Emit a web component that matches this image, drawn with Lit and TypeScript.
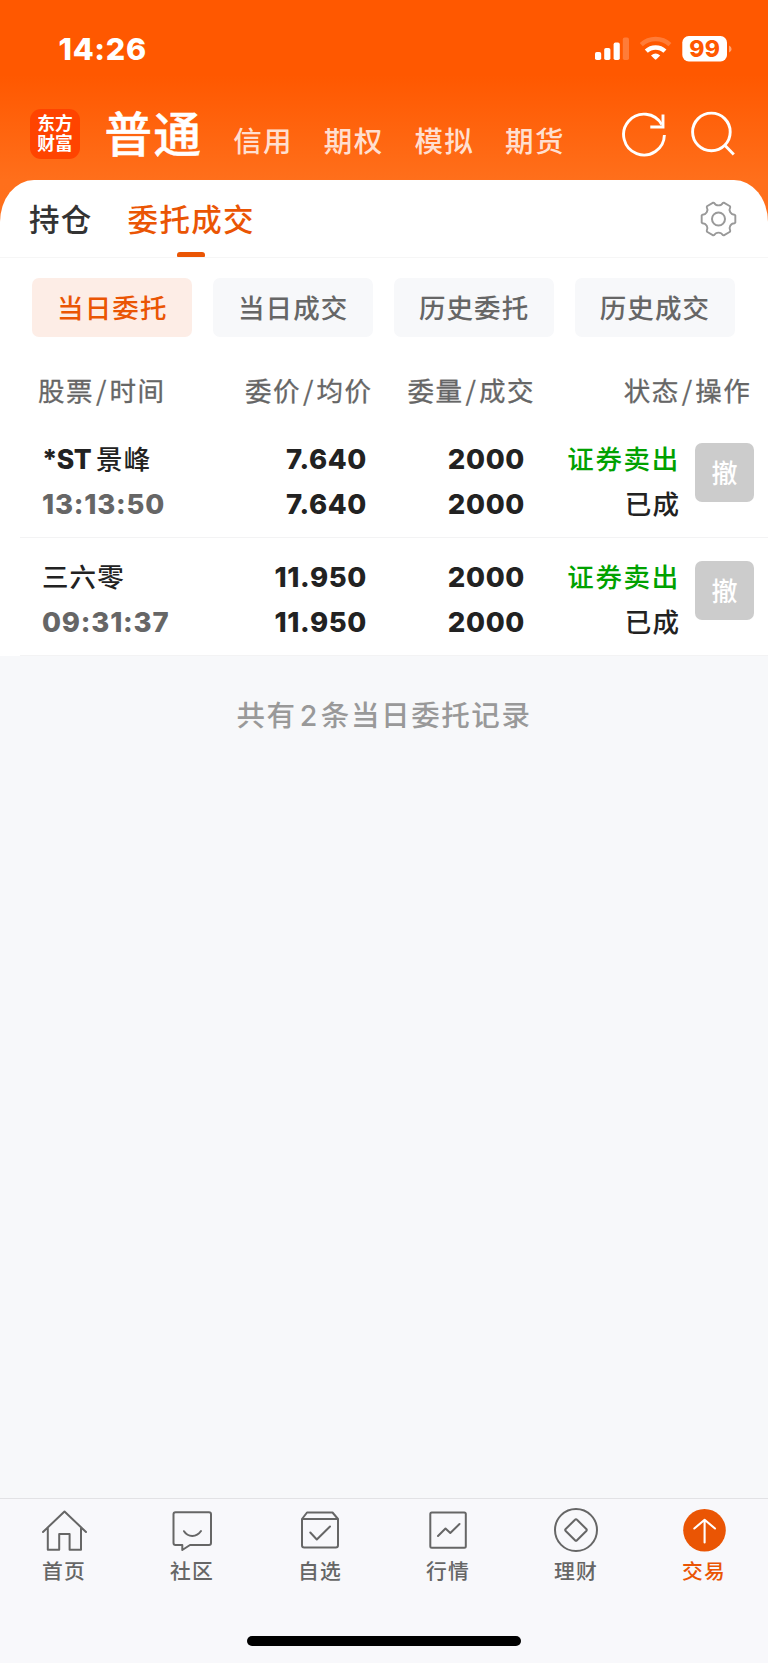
import { LitElement, html, css, svg } from "lit";
import { customElement, property } from "lit/decorators.js";
import { classMap } from "lit/directives/class-map.js";

const CJK = css`"Noto Sans CJK SC", "Noto Sans", sans-serif`;
const NUM = css`"Inter", "Noto Sans CJK SC", sans-serif`;

const gearPath = (cx: number, cy: number) => {
  const at = (r: number, deg: number) => {
    const a = (deg * Math.PI) / 180;
    return `${(cx + r * Math.cos(a)).toFixed(2)} ${(cy + r * Math.sin(a)).toFixed(2)}`;
  };
  let d = `M${at(17.2, -12)}`;
  for (let i = 0; i < 6; i++) {
    const t = i * 60;
    d += `L${at(17.2, t + 12)}L${at(16.6, t + 15)}C${at(13, t + 19)} ${at(13, t + 41)} ${at(16.6, t + 45)}L${at(17.2, t + 48)}`;
  }
  return d + "Z";
};

@customElement("status-bar")
class StatusBar extends LitElement {
  static styles = css`
    :host { display: flex; justify-content: space-between; align-items: flex-start; height: 98px; padding: 34px 34px 0 58.5px; box-sizing: border-box; color: #fff; }
    .time { font: 800 30.5px/30px ${NUM}; letter-spacing: 0.7px; }
    .icons { display: block; }
    .level { font: 800 23px ${NUM}; fill: #ff5800; letter-spacing: 0.4px; }
  `;
  render() {
    return html`
      <div class="time">14:26</div>
      <svg class="icons" width="140" height="30" viewBox="594 34 140 30" fill="#fff">
        <rect x="595" y="52" width="6.2" height="8" rx="1.8" />
        <rect x="604.2" y="48" width="6.2" height="12" rx="1.8" />
        <rect x="613.6" y="42.6" width="6.2" height="17.4" rx="1.8" />
        <rect x="622.8" y="37.6" width="6.2" height="22.4" rx="1.8" opacity=".22" />
        <g fill="none" stroke="#fff" stroke-width="4.4">
          <path d="M641.3 44.7A20.8 20.8 0 0 1 669.9 44.7" opacity=".22" />
          <path d="M646.3 51.2A13.4 13.4 0 0 1 664.9 51.2" />
        </g>
        <path d="M651 55.6Q655.6 51.2 660.2 55.6L656.4 59.3Q655.6 60 654.8 59.3Z" />
        <rect x="682.3" y="36" width="44.7" height="25.4" rx="6.5" />
        <path d="M729 45.5Q731.6 46.5 731.6 49T729 52.5Z" opacity=".45" />
        <text class="level" x="704.8" y="57" text-anchor="middle">99</text>
      </svg>
    `;
  }
}

@customElement("account-nav")
class AccountNav extends LitElement {
  static styles = css`
    :host { display: flex; align-items: flex-start; height: 82px; padding: 0 32px 0 30px; box-sizing: border-box; color: #fff; font-family: ${CJK}; }
    .logo { width: 50px; height: 50px; margin-top: 10.5px; border-radius: 11px; background: #ff4400; box-sizing: border-box; padding-top: 3.5px; text-align: center; font: 700 17.8px/20px ${CJK}; }
    .current { margin: -1.5px 0 0 24.5px; font-size: 47.5px; line-height: 69px; font-weight: 500; letter-spacing: 1.6px; -webkit-text-stroke: 0.5px #fff; }
    .others { display: flex; gap: 30.8px; margin: 21px 0 0 30.5px; font-size: 28.5px; line-height: 42px; letter-spacing: 1.4px; font-weight: 500; color: #ffdfd0; }
    .tools { margin: 13px 0 0 auto; }
  `;
  render() {
    return html`
      <div class="logo">东方<br />财富</div>
      <div class="current">普通</div>
      <div class="others">${["信用", "期权", "模拟", "期货"].map((t) => html`<span>${t}</span>`)}</div>
      <svg class="tools" width="114" height="46" viewBox="622 111 114 46" fill="none" stroke="#fff" stroke-width="2.9">
        <path d="M664.4 135A20.4 20.4 0 1 1 661.8 124.6" />
        <path d="M663 114.5V127H650.3" />
        <circle cx="711.4" cy="131.9" r="18.8" />
        <path d="M724.8 145.3L733.8 154.5" />
      </svg>
    `;
  }
}

@customElement("section-tabs")
class SectionTabs extends LitElement {
  static styles = css`
    :host { display: flex; height: 78px; padding: 0 30px 0 29px; box-sizing: border-box; border-bottom: 1px solid #f6f6f6; font: 500 30.5px/44px ${CJK}; letter-spacing: 1.3px; color: #333; }
    .tab { display: flex; flex-direction: column; align-items: center; padding-top: 16px; margin-right: 35px; }
    .on { color: #ea5504; }
    .mark { width: 28px; height: 6px; margin-top: 12px; border-radius: 3px 3px 1px 1px; background: #ea5504; }
    .gear { margin: 19px 0 0 auto; }
  `;
  render() {
    return html`
      <div class="tab">持仓</div>
      <div class="tab on">委托成交<div class="mark"></div></div>
      <svg class="gear" width="40" height="40" viewBox="698 199 40 40" fill="none" stroke="#999" stroke-width="1.9" stroke-linejoin="round">
        <path d=${gearPath(718.5, 219)} />
        <circle cx="718.5" cy="219" r="6.5" stroke-width="2" />
      </svg>
    `;
  }
}

@customElement("filter-pills")
class FilterPills extends LitElement {
  static styles = css`
    :host { display: grid; grid-template-columns: repeat(4, 160px); column-gap: 20.9px; padding: 20px 0 0 32.3px; font: 500 26.5px/57px ${CJK}; letter-spacing: 1.1px; color: #666; }
    .pill { height: 59px; border-radius: 7px; background: #f7f8fa; text-align: center; }
    .on { background: #fdede6; color: #ea5504; }
  `;
  render() {
    return ["当日委托", "当日成交", "历史委托", "历史成交"].map(
      (t, i) => html`<div class=${classMap({ pill: true, on: i === 0 })}>${t}</div>`
    );
  }
}

@customElement("order-row")
class OrderRow extends LitElement {
  @property() name = "";
  @property() time = "";
  @property() price = "";
  static styles = css`
    :host { display: grid; grid-template-columns: 180px 145px 158px 155px 1fr; height: 118px; box-sizing: border-box; margin-left: 20px; padding: 17px 14px 0 22px; border-bottom: 1px solid #f3f3f4; font: 800 27.5px/45px ${NUM}; color: #222; }
    .cell { text-align: right; letter-spacing: 0.65px; }
    .cell div { height: 45px; }
    .left { text-align: left; letter-spacing: 0.8px; }
    .prefix { font-size: 26.5px; letter-spacing: -0.6px; margin-right: 5px; }
    .left .cjk { line-height: 40px; }
    .cjk { font: 500 26.5px/42px ${CJK}; letter-spacing: 1.1px; }
    .time { color: #666; }
    .side { color: #00a100; letter-spacing: 1.7px; }
    .cancel { width: 59px; height: 59px; margin: 6px 0 0 auto; border-radius: 7px; background: #ccc; color: #fff; text-align: center; font: 500 26px/57px ${CJK}; }
  `;
  render() {
    const st = this.name.startsWith("*ST");
    return html`
      <div class="cell left">
        <div>${st ? html`<span class="prefix">*ST</span>` : ""}<span class="cjk">${st ? this.name.slice(3) : this.name}</span></div>
        <div class="time">${this.time}</div>
      </div>
      <div class="cell"><div>${this.price}</div><div>${this.price}</div></div>
      <div class="cell"><div>2000</div><div>2000</div></div>
      <div class="cell"><div class="cjk side">证券卖出</div><div class="cjk">已成</div></div>
      <div class="cancel">撤</div>
    `;
  }
}

@customElement("tab-bar")
class TabBar extends LitElement {
  static styles = css`
    :host { display: flex; flex-direction: column; align-items: center; height: 165px; box-sizing: border-box; border-top: 1px solid #e2e2e5; background: #f8f8fb; }
    .items { display: grid; grid-template-columns: repeat(6, 128px); height: 137px; }
    .item { display: flex; flex-direction: column; align-items: center; padding-top: 7px; color: #666; font: 500 20.8px/30px ${CJK}; letter-spacing: 1.2px; }
    .icon { display: block; margin-bottom: 1px; fill: none; stroke: #666; stroke-width: 2; stroke-linejoin: round; stroke-linecap: round; }
    .on { color: #ea5504; }
    .home { width: 274px; height: 10px; border-radius: 5px; background: #000; }
  `;
  render() {
    const icons = [
      svg`<path d="M3 26L24.5 5.5L46 26M7.8 22V43.8H19.2V28H29.6V43.8H41V22"/>`,
      svg`<path d="M7.5 6.2H41Q43 6.2 43 8.2V37Q43 39 41 39H22L14.3 44V39H7.5Q5.5 39 5.5 37V8.2Q5.5 6.2 7.5 6.2Z"/><path d="M16 25.2Q19 29.9 24.3 29.9T33 25"/>`,
      svg`<path d="M6 13L11 6.5H36.5L42 13V39.3Q42 41.6 39.7 41.6H8.2Q6 41.6 6 39.3ZM6 13H42M14.3 26.5L20.8 33.5L34 20.5"/>`,
      svg`<rect x="6.3" y="6.5" width="35.5" height="35.2" rx="1.5"/><path d="M14 30L21.5 22.5L26.3 27L35.5 18"/>`,
      svg`<circle cx="24" cy="24" r="21"/><path d="M23 13.7Q24 12.6 25 13.7L34.3 23Q35.2 24 34.3 25L25 34.3Q24 35.3 23 34.3L13.7 25Q12.7 24 13.7 23Z"/>`,
      svg`<circle cx="24.5" cy="24.2" r="21.3" fill="#ea5504" stroke="none"/><path d="M24.6 36.5V14M14.3 22.5L24.6 13.8L35 22.5" stroke="#fff" stroke-width="2.1"/>`,
    ];
    return html`
      <div class="items">
        ${["首页", "社区", "自选", "行情", "理财", "交易"].map(
          (t, i) => html`<div class=${classMap({ item: true, on: i === 5 })}>
            <svg class="icon" width="48" height="48" viewBox="0 0 48 48">${icons[i]}</svg>
            <span>${t}</span>
          </div>`
        )}
      </div>
      <div class="home"></div>
    `;
  }
}

@customElement("app-root")
class AppRoot extends LitElement {
  static styles = css`
    :host { display: flex; flex-direction: column; width: 768px; height: 1663px; overflow: hidden; background: linear-gradient(#ff5800 0, #ff5800 75px, #ff6f1b 180px, #ff701c 240px, #f7f8fa 240px); }
    .card { background: #fff; border-radius: 34px 34px 0 0 / 42px 42px 0 0; height: 476px; box-sizing: border-box; }
    .head { display: grid; grid-template-columns: 180px 154.5px 162.5px 216.2px; height: 83px; padding: 31px 0 0 38px; box-sizing: border-box; font: 400 26.5px/44px ${CJK}; letter-spacing: 1.5px; color: #666; -webkit-text-stroke: 0.3px #666; }
    .head span { text-align: right; }
    .head .first { text-align: left; }
    .head i { font-style: normal; padding: 0 1.5px 0 2px; }
    .empty { flex: 1; background: #f7f8fa; padding-top: 37px; text-align: center; color: #999; font: 500 28.5px/42px ${CJK}; letter-spacing: 1.6px; }
    .count { font-family: ${NUM}; padding: 0 2px 0 3px; }
  `;
  render() {
    const heads = [["股票", "时间"], ["委价", "均价"], ["委量", "成交"], ["状态", "操作"]];
    return html`
      <status-bar></status-bar>
      <account-nav></account-nav>
      <div class="card">
        <section-tabs></section-tabs>
        <filter-pills></filter-pills>
        <div class="head">${heads.map(
          ([a, b], i) => html`<span class=${classMap({ first: i === 0 })}>${a}<i>/</i>${b}</span>`
        )}</div>
        <order-row name="*ST景峰" time="13:13:50" price="7.640"></order-row>
        <order-row name="三六零" time="09:31:37" price="11.950"></order-row>
      </div>
      <div class="empty">共有<span class="count">2</span>条当日委托记录</div>
      <tab-bar></tab-bar>
    `;
  }
}
